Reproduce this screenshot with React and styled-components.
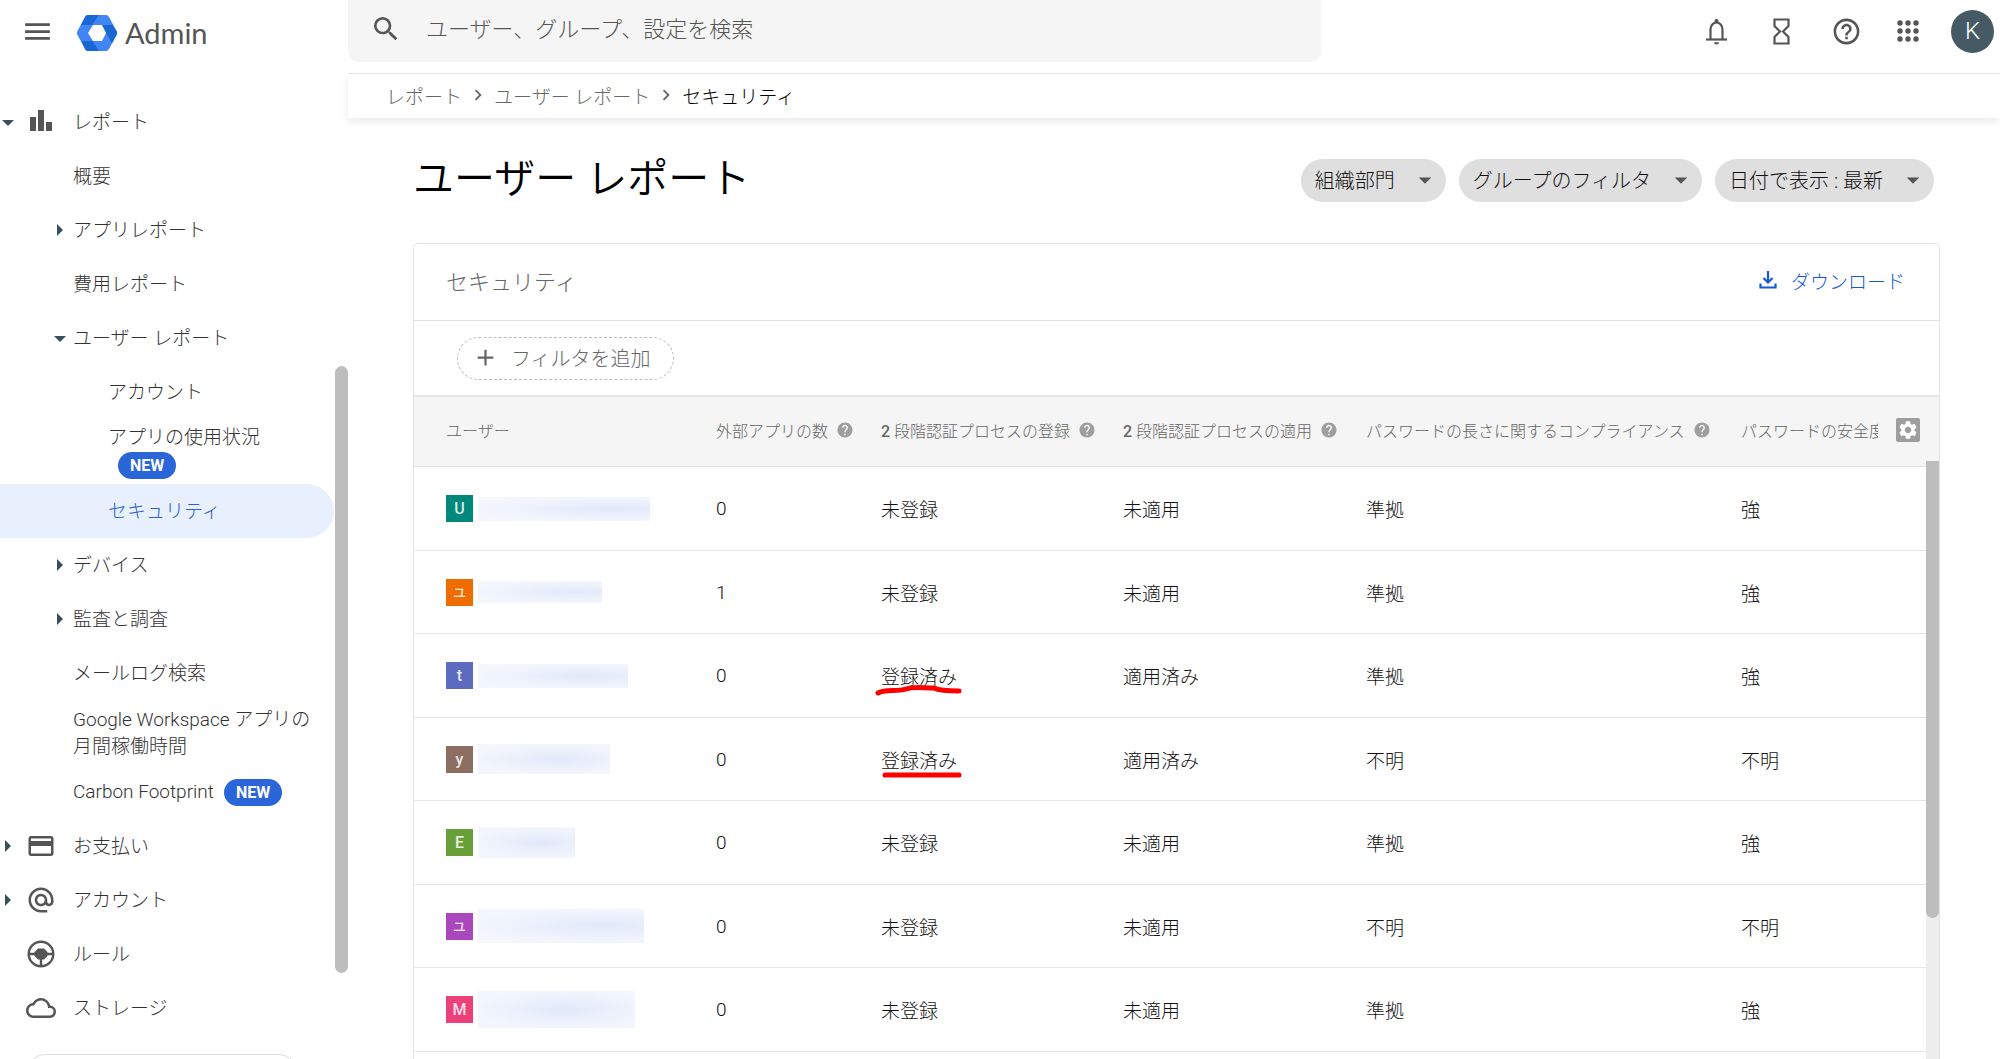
import React, { useState } from "react";
import styled, { createGlobalStyle } from "styled-components";
import {
  MdAdd,
  MdAlternateEmail,
  MdArrowDropDown,
  MdChevronRight,
  MdCreditCard,
  MdHelp,
  MdHelpOutline,
  MdMenu,
  MdOutlineCloud,
  MdSearch,
  MdSettings,
} from "react-icons/md";

const GlobalStyle = createGlobalStyle`
  * {
    box-sizing: border-box;
  }
  body {
    margin: 0;
    background: #fff;
    color: #333;
    font-family: Roboto, "Noto Sans CJK JP", sans-serif;
    font-size: 19px;
    font-weight: 300;
  }
  button, input {
    font-family: inherit;
    font-weight: inherit;
    color: inherit;
  }
  button {
    border: none;
    background: none;
    padding: 0;
    cursor: pointer;
  }
  a {
    color: inherit;
    text-decoration: none;
  }
`;

const Page = styled.div`
  display: flex;
  flex-direction: column;
  height: 100vh;
  overflow: hidden;
`;

const Header = styled.header`
  display: flex;
  flex: none;
  height: 73px;
  color: #555;
`;
const Brand = styled.div`
  display: flex;
  flex: none;
  align-items: center;
  width: 348px;
  height: 62px;
  padding-left: 21px;
`;
const IconButton = styled.button`
  display: flex;
  align-items: center;
  justify-content: center;
  font-size: ${(props) => props.$size || 31}px;
`;
const BrandLink = styled.a`
  display: flex;
  align-items: center;
  gap: 8px;
  margin-left: 23px;
  padding-top: 3px;
  font-family: Lato, sans-serif;
  font-size: 29px;
  font-weight: 400;
  line-height: 36px;
`;
const SearchForm = styled.form`
  display: flex;
  align-items: center;
  flex: 0 1 973px;
  height: 62px;
  padding: 0 22px 4px;
  border-radius: 0 0 10px 10px;
  background: #f5f5f5;
`;
const SearchInput = styled.input`
  flex: 1;
  margin-left: 22px;
  border: none;
  outline: none;
  background: transparent;
  font-size: 22px;

  &::placeholder {
    color: #555;
    opacity: 1;
  }
`;
const HeaderActions = styled.div`
  display: flex;
  align-items: center;
  gap: 34px;
  height: 62px;
  margin-left: auto;
  padding-right: 6px;
`;
const Avatar = styled.button`
  width: 43px;
  height: 43px;
  margin-left: -3px;
  border-radius: 50%;
  background: #455a64;
  color: #fff;
  font-size: 24px;
`;

const Body = styled.div`
  display: flex;
  flex: 1;
  min-height: 0;
`;
const Sidebar = styled.nav`
  position: relative;
  flex: none;
  width: 348px;
  padding: 22px 14px 0 0;
  overflow: hidden;
`;
const SideThumb = styled.div`
  position: absolute;
  top: 293px;
  right: 0;
  width: 13px;
  height: 607px;
  border-radius: 7px;
  background: #bdbdbd;
`;
const NavList = styled.ul`
  margin: 0;
  padding: 0;
  list-style: none;
`;
const indent = { 1: 2, 2: 54, 3: 108 };
const NavItem = styled.a`
  display: flex;
  align-items: center;
  min-height: ${(props) => (props.$tall ? 65 : 54)}px;
  padding: 0 14px 0 ${(props) => indent[props.$level]}px;
  border-radius: 0 27px 27px 0;
  background: ${(props) => (props.$active ? "#e8f0fe" : "transparent")};
  color: ${(props) => (props.$active ? "#2a5fd0" : "#333")};
  line-height: 27px;
`;
const Arrow = styled.span`
  display: flex;
  flex: none;
  width: 12px;
  margin-right: ${(props) => (props.$level === 1 ? 12 : 7)}px;
  color: #37505c;
`;
const NavIcon = styled.span`
  display: flex;
  flex: none;
  width: 30px;
  margin-right: 17px;
  color: #555;
  font-size: 30px;
`;
const Badge = styled.span`
  display: inline-block;
  margin-left: 10px;
  padding: 0 12px;
  border-radius: 14px;
  background: #2b66d9;
  color: #fff;
  font-size: 16px;
  font-weight: 700;
  line-height: 27px;
`;
const NavFooter = styled.button`
  display: block;
  width: 276px;
  height: 44px;
  margin: 19px 0 0 24px;
  border: 1px solid #dadce0;
  border-radius: 22px;
`;

const Main = styled.main`
  display: flex;
  flex: 1;
  flex-direction: column;
  min-width: 0;
`;
const Breadcrumbs = styled.nav`
  display: flex;
  flex: none;
  align-items: center;
  height: 45px;
  padding: 0 0 2px 38px;
  border-top: 1px solid #e4e4e4;
  box-shadow: 0 4px 8px rgba(0, 0, 0, 0.08);
  color: #666;

  svg {
    margin: 0 5px;
    font-size: 22px;
  }
`;
const Current = styled.span`
  color: #000;
`;
const Content = styled.div`
  display: flex;
  flex: 1;
  flex-direction: column;
  min-height: 0;
  padding: 0 60px 0 65px;
`;
const TitleRow = styled.div`
  display: flex;
  flex: none;
  align-items: center;
  height: 125px;
`;
const Title = styled.h1`
  margin: 0;
  padding-bottom: 3px;
  color: #000;
  font-size: 41px;
  font-weight: 350;
  line-height: 48px;
`;
const Chips = styled.div`
  display: flex;
  gap: 13px;
  margin-left: auto;
  padding-right: 6px;
`;
const Chip = styled.button`
  display: flex;
  align-items: center;
  height: 43px;
  padding: 0 6px 2px 14px;
  border-radius: 22px;
  background: #dfdfdf;
  color: #111;
  font-size: 20px;

  svg {
    margin-left: 15px;
    color: #555;
    font-size: 30px;
  }
`;

const Card = styled.section`
  display: flex;
  flex: 1;
  flex-direction: column;
  min-height: 0;
  border: 1px solid #e4e4e4;
  border-bottom: none;
  border-radius: 5px 5px 0 0;
`;
const CardHeader = styled.div`
  display: flex;
  flex: none;
  align-items: center;
  justify-content: space-between;
  height: 77px;
  padding: 0 34px 4px 32px;
  border-bottom: 1px solid #e0e0e0;
`;
const CardTitle = styled.h2`
  margin: 0;
  color: #666;
  font-size: 22px;
  font-weight: 300;
`;
const Download = styled.button`
  display: flex;
  align-items: center;
  gap: 14px;
  color: #1558d6;
  font-size: 19px;
`;
const FilterBar = styled.div`
  display: flex;
  flex: none;
  align-items: center;
  height: 74px;
  padding-left: 43px;
`;
const AddFilter = styled.button`
  display: flex;
  align-items: center;
  height: 43px;
  padding: 0 22px 1px 14px;
  border: 1px dashed #bbb;
  border-radius: 22px;
  color: #666;
  font-size: 20px;

  svg {
    margin-right: 12px;
    font-size: 27px;
  }
`;

const TableArea = styled.div`
  position: relative;
  flex: 1;
  min-height: 0;
  overflow: hidden;
`;
const Table = styled.table`
  width: 100%;
  table-layout: fixed;
  border-collapse: separate;
  border-spacing: 0;
`;
const HeadCell = styled.th`
  width: ${(props) => (props.$width ? `${props.$width}px` : "auto")};
  height: 72px;
  padding: 0 0 4px;
  border-top: 2px solid #e6e6e6;
  border-bottom: 1px solid #e0e0e0;
  background: #f5f5f5;
  color: #666;
  font-size: 16px;
  font-weight: 300;
  text-align: left;
  white-space: nowrap;

  &:first-child {
    padding-left: 32px;
  }
`;
const HeadContent = styled.div`
  display: flex;
  align-items: center;

  svg {
    margin-left: 8px;
    color: #9e9e9e;
    font-size: 18px;
  }
`;
const ClippedLabel = styled.span`
  flex: 1;
  overflow: hidden;
`;
const Digit = styled.b`
  font-weight: 500;
`;
const GearButton = styled.button`
  display: flex;
  align-items: center;
  justify-content: center;
  width: 24px;
  height: 24px;
  margin: 0 19px 0 18px;
  border-radius: 2px;
  background: #9e9e9e;

  svg {
    margin: 0;
    color: #fff;
    font-size: 22px;
  }
`;
const Row = styled.tr`
  height: 84px;

  &:nth-child(even) {
    height: 83px;
  }
`;
const Cell = styled.td`
  padding: 0;
  border-bottom: 1px solid #e4e4e4;
  color: #111;

  &:first-child {
    padding-left: 32px;
  }
`;
const User = styled.div`
  display: flex;
  align-items: center;
  gap: 5px;
`;
const Initial = styled.span`
  width: 27px;
  height: 27px;
  background: ${(props) => props.$color};
  color: rgba(255, 255, 255, 0.85);
  font-size: ${(props) => (props.$kana ? 13 : 16)}px;
  font-weight: 500;
  line-height: 27px;
  text-align: center;
`;
const HiddenName = styled.span`
  width: ${(props) => props.$width}px;
  height: ${(props) => props.$height}px;
  background: radial-gradient(
      ellipse at ${(props) => props.$focus}% 50%,
      #e1e8f9 0%,
      rgba(232, 238, 251, 0.6) 45%,
      rgba(245, 248, 254, 0) 75%
    ),
    #f3f6fd;
`;
const Marked = styled.span`
  position: relative;

  svg {
    position: absolute;
    top: 14px;
    left: -6px;
    overflow: visible;
  }
`;
const Track = styled.div`
  position: absolute;
  top: 66px;
  right: 0;
  bottom: 0;
  width: 13px;
  background: #ededed;
`;
const Thumb = styled.div`
  height: 457px;
  border-radius: 0 0 7px 7px;
  background: #bdbdbd;
`;

const Logo = () => (
  <svg width="40" height="36" viewBox="0 0 40 36" aria-hidden="true">
    <path d="M11 0H29Q31 0 32 2L39.500 16Q40.500 18 39.500 20L32 34Q31 36 29 36H11Q9 36 8 34L.5 20Q-.5 18 .5 16L8 2Q9 0 11 0Z" fill="#4285f4" />
    <path d="M11 0H22L15 10H4L8 2Q9 0 11 0Z" fill="#1967d2" />
    <path d="M24.500 10H35.500L39.500 16Q40.500 18 39.500 20L35 28L29 18Z" fill="#1967d2" />
    <path d="M4.500 26H15.500L22 36H11Q9 36 8 34Z" fill="#1967d2" />
    <path d="M16 10H25L29 18L25 26H16L11 18Z" fill="#fff" />
  </svg>
);

const BellIcon = () => (
  <svg width="31" height="31" viewBox="0 0 31 31" fill="none" stroke="currentColor" strokeWidth="2.2" aria-hidden="true">
    <path d="M9.500 23V13.500a6 7 0 0 1 12 0V23" />
    <path d="M5 23.500h21" />
    <path d="M13 26.300h5a2.500 2.300 0 0 1-5 0z" fill="currentColor" stroke="none" />
    <circle cx="15.500" cy="5" r="2" fill="currentColor" stroke="none" />
  </svg>
);

const HourglassIcon = () => (
  <svg width="31" height="31" viewBox="0 0 31 31" fill="none" stroke="currentColor" strokeWidth="2.2" aria-hidden="true">
    <path d="M8.500 3.500h14v6.500L17 15.500l5.500 5.500v6.500h-14V21l5.500-5.500-5.500-5.500z" />
  </svg>
);

const AppsIcon = () => (
  <svg width="24" height="24" viewBox="0 0 24 24" fill="currentColor" aria-hidden="true">
    {[4, 12, 20].map((y) =>
      [4, 12, 20].map((x) => <circle key={`${x}-${y}`} cx={x} cy={y} r="2.7" />)
    )}
  </svg>
);

const DownloadIcon = () => (
  <svg width="18" height="18" viewBox="0 0 18 18" fill="none" stroke="currentColor" strokeWidth="2.2" aria-hidden="true">
    <path d="M9 0v11M4.500 7L9 11.500 13.500 7M1.500 12.500v4h15v-4" />
  </svg>
);

const BarsIcon = () => (
  <svg width="30" height="30" viewBox="0 0 30 30" fill="currentColor" aria-hidden="true">
    <path d="M4 10h6v14H4zM12 3h6v21h-6zM20 15h6v9h-6z" />
  </svg>
);

const WheelIcon = () => (
  <svg width="30" height="30" viewBox="0 0 30 30" fill="none" stroke="currentColor" aria-hidden="true">
    <circle cx="15" cy="15" r="12.300" strokeWidth="2.400" />
    <path d="M2 15h26M15 15v13" strokeWidth="2.400" />
    <path d="M12 9.500h6l3.500 3.500v4l-3.500 3.500h-6L8.500 17v-4z" fill="currentColor" stroke="none" />
  </svg>
);

const TreeArrow = ({ open }) => (
  <svg width="12" height="14" viewBox="0 0 12 14" fill="currentColor" aria-hidden="true">
    {open ? <path d="M0 5h12L6 11z" /> : <path d="M3 1v12l6-6z" />}
  </svg>
);

const navItems = [
  { label: "レポート", level: 1, arrow: "open", icon: <BarsIcon /> },
  { label: "概要", level: 2 },
  { label: "アプリレポート", level: 2, arrow: "closed" },
  { label: "費用レポート", level: 2 },
  { label: "ユーザー レポート", level: 2, arrow: "open" },
  { label: "アカウント", level: 3 },
  { label: "アプリの使用状況", level: 3, tall: true, badge: true },
  { label: "セキュリティ", level: 3, active: true },
  { label: "デバイス", level: 2, arrow: "closed" },
  { label: "監査と調査", level: 2, arrow: "closed" },
  { label: "メールログ検索", level: 2 },
  { label: "Google Workspace アプリの月間稼働時間", level: 2, tall: true },
  { label: "Carbon Footprint", level: 2, badge: true },
  { label: "お支払い", level: 1, arrow: "closed", icon: <MdCreditCard /> },
  { label: "アカウント", level: 1, arrow: "closed", icon: <MdAlternateEmail /> },
  { label: "ルール", level: 1, icon: <WheelIcon /> },
  { label: "ストレージ", level: 1, icon: <MdOutlineCloud /> },
];

const columns = [
  { label: "ユーザー", width: 302 },
  { label: "外部アプリの数", width: 165, help: true },
  { digit: "2", label: " 段階認証プロセスの登録", width: 242, help: true },
  { digit: "2", label: " 段階認証プロセスの適用", width: 243, help: true },
  { label: "パスワードの長さに関するコンプライアンス", width: 375, help: true },
];

const users = [
  { initial: "U", color: "#00897b", name: [172, 24, 78], apps: 0, enrolled: "未登録", enforced: "未適用", length: "準拠", strength: "強" },
  { initial: "ユ", kana: true, color: "#ef6c00", name: [124, 22, 80], apps: 1, enrolled: "未登録", enforced: "未適用", length: "準拠", strength: "強" },
  { initial: "t", color: "#5c6bc0", name: [150, 24, 72], apps: 0, enrolled: "登録済み", mark: "M3 13C10 9 22 12 31 9S48 8 59 8C65 11 74 11 84 11", enforced: "適用済み", length: "準拠", strength: "強" },
  { initial: "y", color: "#8d6e63", name: [132, 30, 60], apps: 0, enrolled: "登録済み", mark: "M10 11H84", enforced: "適用済み", length: "不明", strength: "不明" },
  { initial: "E", color: "#689f38", name: [97, 31, 65], apps: 0, enrolled: "未登録", enforced: "未適用", length: "準拠", strength: "強" },
  { initial: "ユ", kana: true, color: "#ab47bc", name: [166, 34, 75], apps: 0, enrolled: "未登録", enforced: "未適用", length: "不明", strength: "不明" },
  { initial: "M", color: "#ec407a", name: [157, 37, 55], apps: 0, enrolled: "未登録", enforced: "未適用", length: "準拠", strength: "強" },
];

const Nav = () => (
  <Sidebar aria-label="メイン メニュー">
    <NavList>
      {navItems.map((item, i) => (
        <li key={i}>
          <NavItem
            href="#"
            $level={item.level}
            $tall={item.tall}
            $active={item.active}
            aria-current={item.active ? "page" : undefined}
          >
            {item.level < 3 && (
              <Arrow $level={item.level}>
                {item.arrow && <TreeArrow open={item.arrow === "open"} />}
              </Arrow>
            )}
            {item.icon && <NavIcon>{item.icon}</NavIcon>}
            <span>
              {item.label}
              {item.badge && <Badge>NEW</Badge>}
            </span>
          </NavItem>
        </li>
      ))}
    </NavList>
    <NavFooter aria-label="表示" />
    <SideThumb />
  </Sidebar>
);

const UserTable = () => (
  <TableArea>
    <Table>
      <thead>
        <tr>
          {columns.map((col) => (
            <HeadCell key={col.label} $width={col.width}>
              <HeadContent>
                <span>
                  {col.digit && <Digit>{col.digit}</Digit>}
                  {col.label}
                </span>
                {col.help && <MdHelp />}
              </HeadContent>
            </HeadCell>
          ))}
          <HeadCell>
            <HeadContent>
              <ClippedLabel>パスワードの安全度</ClippedLabel>
              <GearButton aria-label="列の管理">
                <MdSettings />
              </GearButton>
            </HeadContent>
          </HeadCell>
        </tr>
      </thead>
      <tbody>
        {users.map((user, i) => (
          <Row key={i}>
            <Cell>
              <User>
                <Initial $color={user.color} $kana={user.kana}>
                  {user.initial}
                </Initial>
                <HiddenName
                  $width={user.name[0]}
                  $height={user.name[1]}
                  $focus={user.name[2]}
                />
              </User>
            </Cell>
            <Cell>{user.apps}</Cell>
            <Cell>
              {user.mark ? (
                <Marked>
                  {user.enrolled}
                  <svg width="88" height="16" viewBox="0 0 88 16" fill="none" aria-hidden="true">
                    <path d={user.mark} stroke="#f00" strokeWidth="5" strokeLinecap="round" />
                  </svg>
                </Marked>
              ) : (
                user.enrolled
              )}
            </Cell>
            <Cell>{user.enforced}</Cell>
            <Cell>{user.length}</Cell>
            <Cell>{user.strength}</Cell>
          </Row>
        ))}
      </tbody>
    </Table>
    <Track>
      <Thumb />
    </Track>
  </TableArea>
);

const App = () => {
  const [query, setQuery] = useState("");

  return (
    <Page lang="ja">
      <GlobalStyle />
      <Header>
        <Brand>
          <IconButton $size={33} aria-label="メニュー">
            <MdMenu />
          </IconButton>
          <BrandLink href="#">
            <Logo />
            Admin
          </BrandLink>
        </Brand>
        <SearchForm role="search" onSubmit={(e) => e.preventDefault()}>
          <IconButton $size={32} aria-label="検索">
            <MdSearch />
          </IconButton>
          <SearchInput
            type="text"
            aria-label="検索"
            placeholder="ユーザー、グループ、設定を検索"
            value={query}
            onChange={(e) => setQuery(e.target.value)}
          />
        </SearchForm>
        <HeaderActions>
          <IconButton aria-label="通知">
            <BellIcon />
          </IconButton>
          <IconButton aria-label="タスク">
            <HourglassIcon />
          </IconButton>
          <IconButton aria-label="ヘルプ">
            <MdHelpOutline />
          </IconButton>
          <IconButton aria-label="アプリ">
            <AppsIcon />
          </IconButton>
          <Avatar>K</Avatar>
        </HeaderActions>
      </Header>
      <Body>
        <Nav />
        <Main>
          <Breadcrumbs aria-label="パンくずリスト">
            <a href="#">レポート</a>
            <MdChevronRight />
            <a href="#">ユーザー レポート</a>
            <MdChevronRight />
            <Current>セキュリティ</Current>
          </Breadcrumbs>
          <Content>
            <TitleRow>
              <Title>ユーザー レポート</Title>
              <Chips>
                {["組織部門", "グループのフィルタ", "日付で表示 : 最新"].map((label) => (
                  <Chip key={label} aria-haspopup="listbox">
                    {label}
                    <MdArrowDropDown />
                  </Chip>
                ))}
              </Chips>
            </TitleRow>
            <Card>
              <CardHeader>
                <CardTitle>セキュリティ</CardTitle>
                <Download>
                  <DownloadIcon />
                  ダウンロード
                </Download>
              </CardHeader>
              <FilterBar>
                <AddFilter>
                  <MdAdd />
                  フィルタを追加
                </AddFilter>
              </FilterBar>
              <UserTable />
            </Card>
          </Content>
        </Main>
      </Body>
    </Page>
  );
};

export default App;
